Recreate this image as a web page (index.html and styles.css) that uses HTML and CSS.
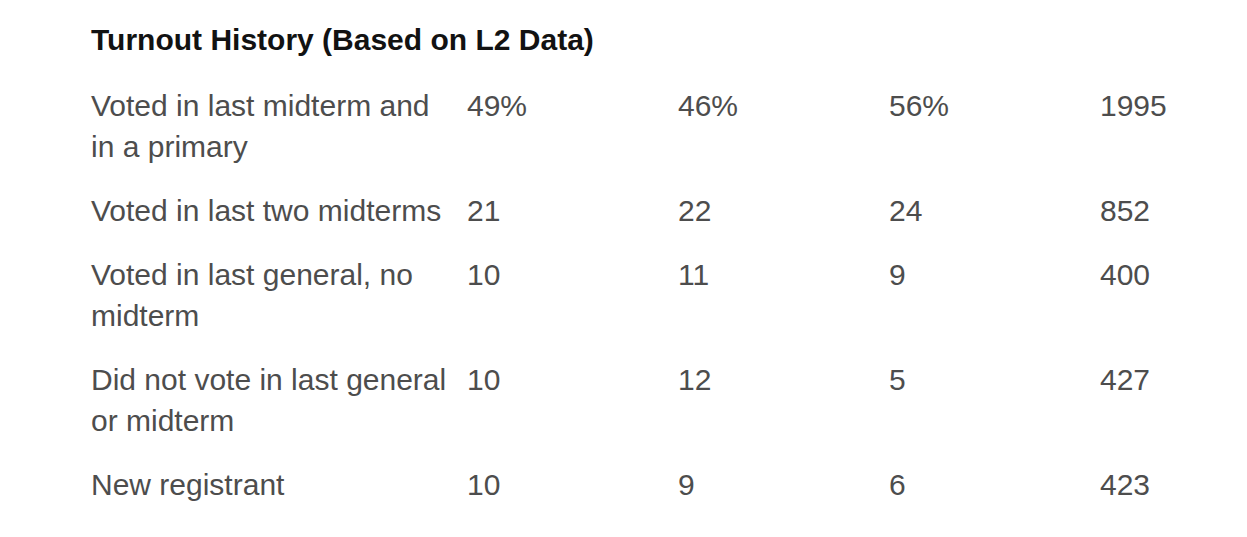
FILE: index.html
```html
<!DOCTYPE html>
<html>
<head>
<meta charset="utf-8">
<link rel="stylesheet" href="styles.css">
</head>
<body>
<div class="wrap">
  <h2 class="title">Turnout History (Based on L2 Data)</h2>
  <div class="table">
    <div class="row">
      <div class="label">Voted in last midterm and in a primary</div>
      <div class="cell">49%</div><div class="cell">46%</div><div class="cell">56%</div><div class="cell">1995</div>
    </div>
    <div class="row">
      <div class="label">Voted in last two midterms</div>
      <div class="cell">21</div><div class="cell">22</div><div class="cell">24</div><div class="cell">852</div>
    </div>
    <div class="row">
      <div class="label">Voted in last general, no midterm</div>
      <div class="cell">10</div><div class="cell">11</div><div class="cell">9</div><div class="cell">400</div>
    </div>
    <div class="row">
      <div class="label">Did not vote in last general or midterm</div>
      <div class="cell">10</div><div class="cell">12</div><div class="cell">5</div><div class="cell">427</div>
    </div>
    <div class="row">
      <div class="label">New registrant</div>
      <div class="cell">10</div><div class="cell">9</div><div class="cell">6</div><div class="cell">423</div>
    </div>
  </div>
</div>
</body>
</html>
```
FILE: styles.css
```css
html, body {
  margin: 0;
  padding: 0;
  background: #fff;
}
.wrap {
  padding: 21px 0 0 91px;
  font-family: "Liberation Sans", Arial, sans-serif;
}
.title {
  margin: 0 0 26px 0;
  font-size: 30px;
  font-weight: bold;
  color: #121212;
  line-height: 38px;
  letter-spacing: 0;
}
.table {
  display: flex;
  flex-direction: column;
  gap: 23px;
}
.row {
  display: grid;
  grid-template-columns: 376px 211px 211px 211px auto;
  font-size: 30px;
  line-height: 41px;
  color: #4d4d4d;
}
.label {
  padding-right: 8px;
}
```
